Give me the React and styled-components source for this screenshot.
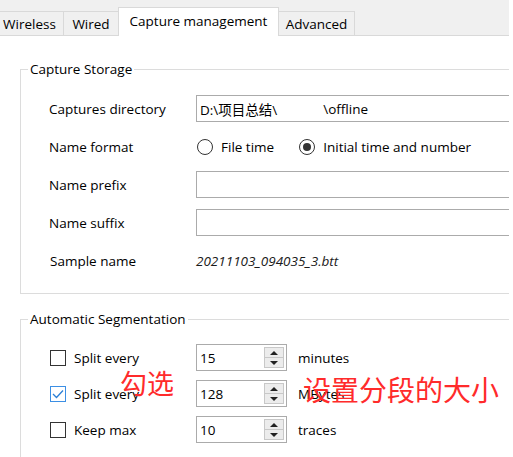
import styled, { createGlobalStyle } from "styled-components";

const GlobalStyle = createGlobalStyle`
  html, body {
    margin: 0;
    padding: 0;
    background: #fff;
  }
  body {
    font-family: "Open Sans", "Noto Sans CJK SC", sans-serif;
  }
`;

const Page = styled.div`
  position: relative;
  width: 509px;
  height: 457px;
  overflow: hidden;
  background: #fff;
  color: #000;
  font-size: 13px;
`;

const TabBar = styled.div`
  display: flex;
  align-items: flex-end;
  height: 35px;
  background: #f0f0f0;
  border-bottom: 1px solid #d9d9d9;
`;

const Tab = styled.div`
  box-sizing: border-box;
  width: ${(p) => p.$w}px;
  height: ${(p) => (p.$active ? 29 : 24)}px;
  margin-left: ${(p) => p.$ml || 0}px;
  margin-bottom: ${(p) => (p.$active ? -1 : 0)}px;
  display: flex;
  align-items: center;
  justify-content: center;
  padding-bottom: ${(p) => (p.$active ? 2 : 0)}px;
  background: ${(p) => (p.$active ? "#fff" : "#f0f0f0")};
  border: 1px solid #d9d9d9;
  border-bottom: none;
  font-size: 13.5px;
  white-space: nowrap;
`;

const Group = styled.fieldset`
  margin: ${(p) => p.$top}px -20px 0 20px;
  padding: 0;
  border: 1px solid #dcdcdc;
  min-width: 0;
`;

const Legend = styled.legend`
  margin-left: 7px;
  padding: 0 2px;
  line-height: 16px;
  font-size: 13.5px;
`;

const Body = styled.div`
  display: flex;
  flex-direction: column;
  gap: ${(p) => p.$gap}px;
  padding: ${(p) => p.$pt}px 0 ${(p) => p.$pb}px 28px;
`;

const Row = styled.div`
  display: grid;
  grid-template-columns: 147px 1fr;
  align-items: center;
  height: 27px;
`;

const Label = styled.div`
  padding-left: ${(p) => p.$indent || 0}px;
  font-size: 13.5px;
  white-space: nowrap;
`;

const TextBox = styled.div`
  box-sizing: border-box;
  height: 27px;
  display: flex;
  align-items: center;
  padding-left: 3px;
  border: 1px solid #ababab;
  background: #fff;
  font-size: 13.5px;
  white-space: nowrap;
`;

const Redacted = styled.span`
  display: inline-block;
  width: 46px;
`;

const Radios = styled.div`
  display: flex;
  align-items: center;
  gap: 25px;
  padding-left: 1px;
`;

const RadioItem = styled.label`
  display: flex;
  align-items: center;
  gap: 8px;
  font-size: 13.5px;
`;

const RadioCircle = styled.span`
  box-sizing: border-box;
  width: 16px;
  height: 16px;
  border: 1px solid #333;
  border-radius: 50%;
  display: flex;
  align-items: center;
  justify-content: center;
  &::after {
    content: "";
    display: ${(p) => (p.$on ? "block" : "none")};
    width: 8px;
    height: 8px;
    border-radius: 50%;
    background: #333;
  }
`;

const Sample = styled.div`
  font-style: italic;
  font-size: 13.5px;
  color: #1a1a1a;
`;

const SegRow = styled.div`
  display: grid;
  grid-template-columns: 147px 91px 1fr;
  align-items: center;
  height: 27px;
`;

const CheckLabel = styled.label`
  display: flex;
  align-items: center;
  gap: 8px;
  padding-left: 1px;
  font-size: 13.5px;
`;

const CheckBox = styled.span`
  box-sizing: border-box;
  width: 16px;
  height: 16px;
  border: 1px solid ${(p) => (p.$on ? "#3c8fe4" : "#333")};
  display: flex;
  align-items: center;
  justify-content: center;
`;

const Spin = styled.div`
  box-sizing: border-box;
  height: 27px;
  display: flex;
  align-items: stretch;
  border: 1px solid #ababab;
  background: #fff;
`;

const SpinValue = styled.div`
  flex: 1;
  display: flex;
  align-items: center;
  padding-left: 3px;
  font-size: 13.5px;
`;

const SpinButtons = styled.div`
  width: 18px;
  margin: 2px 2px 2px 0;
  display: flex;
  flex-direction: column;
  border: 1px solid #c8c8c8;
  background: #ececec;
`;

const SpinBtn = styled.div`
  flex: 1;
  display: flex;
  align-items: center;
  justify-content: center;
  border-top: ${(p) => (p.$down ? "1px solid #c8c8c8" : "none")};
  &::after {
    content: "";
    width: 0;
    height: 0;
    border-left: 4px solid transparent;
    border-right: 4px solid transparent;
    ${(p) =>
      p.$down ? "border-top: 4px solid #222;" : "border-bottom: 4px solid #222;"}
  }
`;

const Unit = styled.div`
  padding-left: 11px;
  font-size: 13.5px;
`;

const Note = styled.div`
  position: absolute;
  left: ${(p) => p.$x}px;
  top: ${(p) => p.$y}px;
  color: #ff2b2b;
  font-family: "Noto Sans CJK SC", sans-serif;
  font-size: ${(p) => p.$size}px;
  line-height: 1;
  white-space: nowrap;
`;

const Check = () => (
  <svg width="12" height="10" viewBox="0 0 12 10">
    <path d="M1 5 L4.5 8.5 L11 1.5" fill="none" stroke="#2b7fd6" strokeWidth="1.3" />
  </svg>
);

const SpinBox = ({ value }) => (
  <Spin>
    <SpinValue>{value}</SpinValue>
    <SpinButtons>
      <SpinBtn />
      <SpinBtn $down />
    </SpinButtons>
  </Spin>
);

const segments = [
  { label: "Split every", value: "15", unit: "minutes", on: false },
  { label: "Split every", value: "128", unit: "MBytes", on: true },
  { label: "Keep max", value: "10", unit: "traces", on: false },
];

const App = () => {
  return (
    <Page>
      <GlobalStyle />
      <TabBar>
        <Tab $w={69} $ml={-5}>Wireless</Tab>
        <Tab $w={56} $ml={-1}>Wired</Tab>
        <Tab $w={161} $ml={-1} $active>Capture management</Tab>
        <Tab $w={77} $ml={-1}>Advanced</Tab>
      </TabBar>

      <Group $top={25}>
        <Legend>Capture Storage</Legend>
        <Body $pt={18} $pb={19} $gap={11}>
          <Row>
            <Label>Captures directory</Label>
            <TextBox>
              D:\项目总结\<Redacted />\offline
            </TextBox>
          </Row>
          <Row>
            <Label>Name format</Label>
            <Radios>
              <RadioItem>
                <RadioCircle />
                File time
              </RadioItem>
              <RadioItem>
                <RadioCircle $on />
                Initial time and number
              </RadioItem>
            </Radios>
          </Row>
          <Row>
            <Label>Name prefix</Label>
            <TextBox />
          </Row>
          <Row>
            <Label>Name suffix</Label>
            <TextBox />
          </Row>
          <Row>
            <Label $indent={1}>Sample name</Label>
            <Sample>20211103_094035_3.btt</Sample>
          </Row>
        </Body>
      </Group>

      <Group $top={17}>
        <Legend>Automatic Segmentation</Legend>
        <Body $pt={17} $pb={20} $gap={9}>
          {segments.map((s, i) => (
            <SegRow key={i}>
              <CheckLabel>
                <CheckBox $on={s.on}>{s.on && <Check />}</CheckBox>
                {s.label}
              </CheckLabel>
              <SpinBox value={s.value} />
              <Unit>{s.unit}</Unit>
            </SegRow>
          ))}
        </Body>
      </Group>

      <Note $x={120} $y={369} $size={27}>勾选</Note>
      <Note $x={303} $y={375} $size={28}>设置分段的大小</Note>
    </Page>
  );
};

export default App;
